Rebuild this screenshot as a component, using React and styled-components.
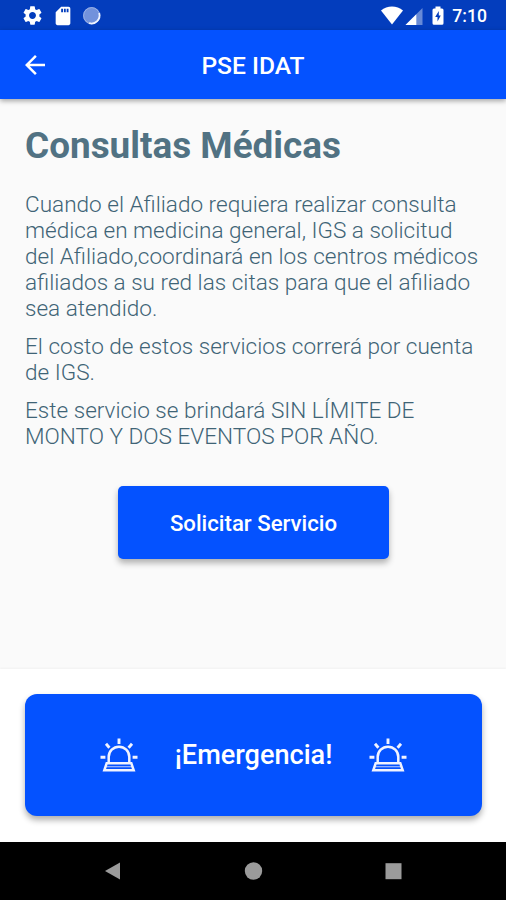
import React from 'react';
import styled, { createGlobalStyle } from 'styled-components';
import { MdArrowBack, MdSettings, MdSdCard } from 'react-icons/md';

const GlobalStyle = createGlobalStyle`
  * {
    box-sizing: border-box;
  }

  body {
    margin: 0;
    font-family: Roboto, sans-serif;
    background: #fafafa;
  }
`;

const Screen = styled.div`
  display: flex;
  flex-direction: column;
  width: 506px;
  height: 900px;
  overflow: hidden;
  background: #fafafa;
`;

const StatusBar = styled.div`
  display: flex;
  align-items: center;
  justify-content: space-between;
  flex: none;
  height: 30px;
  padding: 1px 19px 0 21px;
  background: #033dbd;
  color: #fff;
`;

const StatusGroup = styled.div`
  display: flex;
  align-items: center;
  gap: ${(props) => props.$gap || '0'};

  svg {
    display: block;
  }
`;

const Clock = styled.span`
  font-size: 17.6px;
  line-height: 20px;
  font-weight: 500;
`;

const Header = styled.header`
  position: relative;
  z-index: 1;
  display: grid;
  grid-template-columns: 60px 1fr 60px;
  align-items: center;
  flex: none;
  height: 69px;
  background: #0452ff;
  color: #fff;
  box-shadow: 0 2px 5px rgba(0, 0, 0, 0.35);
`;

const BackButton = styled.button`
  display: flex;
  padding: 0 0 0 20px;
  border: none;
  background: none;
  color: inherit;
  cursor: pointer;
`;

const Title = styled.h1`
  margin: 0;
  padding-top: 2px;
  text-align: center;
  font-size: 24.6px;
  line-height: 28px;
  font-weight: 500;
`;

const Content = styled.main`
  display: flex;
  flex-direction: column;
  flex: 1;
  padding: 25px 20px 0 25px;
  color: #517283;
`;

const Heading = styled.h2`
  margin: 0 0 24px;
  font-size: 36.9px;
  line-height: 44px;
  font-weight: 700;
`;

const Paragraph = styled.p`
  margin: 0 0 12px;
  font-size: 22.57px;
  line-height: 26px;
  font-weight: 300;
  white-space: nowrap;
  color: #3f6476;
`;

const RequestButton = styled.button`
  align-self: center;
  width: 271px;
  height: 73px;
  margin: 24px 0 0 -4px;
  padding: 0;
  border: none;
  border-radius: 5px;
  background: #0452ff;
  color: #fff;
  font: 500 22.2px Roboto, sans-serif;
  box-shadow: 0 4px 6px rgba(0, 0, 0, 0.3);
  cursor: pointer;
`;

const Footer = styled.footer`
  flex: none;
  height: 173px;
  padding: 25px 24px 0 25px;
  background: #fff;
  box-shadow: 0 -1px 2px rgba(0, 0, 0, 0.04);
`;

const EmergencyButton = styled.button`
  display: flex;
  align-items: center;
  justify-content: center;
  gap: 37px;
  width: 100%;
  height: 122px;
  padding: 0;
  border: none;
  border-radius: 12px;
  background: #0452ff;
  color: #fff;
  font: 500 27.1px Roboto, sans-serif;
  box-shadow: 0 4px 6px rgba(0, 0, 0, 0.32);
  cursor: pointer;
`;

const NavBar = styled.nav`
  display: flex;
  align-items: center;
  justify-content: center;
  gap: 122px;
  flex: none;
  height: 58px;
  background: #000;
`;

const SpinnerIcon = () => (
  <svg width="20" height="20" viewBox="0 0 20 20">
    <circle cx="9.6" cy="9.6" r="8.6" fill="#7292dc" />
    <circle cx="9.6" cy="9.6" r="8" fill="none" stroke="#a5b9e8" strokeWidth="0.8" />
    <path d="M17.2 7.1A8.1 8.1 0 0 1 7.1 17.2" fill="none" stroke="#eef3ff" strokeWidth="1.8" />
  </svg>
);

const WifiIcon = () => (
  <svg width="22" height="20" viewBox="0 0 22 20">
    <path d="M0 4.4Q4.8 .5 11 .5T22 4.4L11 18.4Z" fill="#fff" />
  </svg>
);

const SignalIcon = () => (
  <svg width="18" height="20" viewBox="0 0 18 20">
    <path d="M17.5 2V19H.5Z" fill="#fff" fillOpacity="0.4" />
    <path d="M11.3 8.2V19H.5Z" fill="#fff" />
  </svg>
);

const BatteryIcon = () => (
  <svg width="12" height="20" viewBox="0 0 12 20">
    <path
      d="M3.5 .5h5v2H10a1.5 1.5 0 0 1 1.5 1.5v13.3A1.5 1.5 0 0 1 10 18.8H2A1.5 1.5 0 0 1 .5 17.3V4A1.5 1.5 0 0 1 2 2.5h1.5Z"
      fill="#fff"
    />
    <path d="M6.8 5 3.2 11h2.3v4.5L8.8 9.5H6.8Z" fill="#033dbd" />
  </svg>
);

const SirenIcon = () => (
  <svg width="38" height="34" viewBox="0 0 38 34" fill="none" stroke="#f1f3ff" strokeWidth="2.5">
    <path d="M8.7 25V19a10.3 10.3 0 0 1 20.6 0V25" />
    <path d="M6.7 25.2H31.3L33.7 32.3H4.3Z" />
    <path d="M6 28.7H32" strokeWidth="1.2" strokeOpacity="0.65" />
    <path d="M19 .6V6M6 5.8L9.4 9.7M32 5.8L28.6 9.7M.5 19.2H5.4M32.6 19.2H37.5" strokeWidth="2.9" />
  </svg>
);

const NavIcon = ({ children }) => (
  <svg width="18" height="18" viewBox="0 0 18 18" fill="#9b9b9b" overflow="visible">
    {children}
  </svg>
);

const App = () => {
  return (
    <>
      <GlobalStyle />
      <Screen>
        <StatusBar>
          <StatusGroup $gap="8px">
            <MdSettings size={23} />
            <MdSdCard size={22} />
            <SpinnerIcon />
          </StatusGroup>
          <StatusGroup $gap="9px">
            <StatusGroup $gap="2px">
              <WifiIcon />
              <SignalIcon />
            </StatusGroup>
            <StatusGroup $gap="8px">
              <BatteryIcon />
              <Clock>7:10</Clock>
            </StatusGroup>
          </StatusGroup>
        </StatusBar>

        <Header>
          <BackButton type="button" aria-label="Volver">
            <MdArrowBack size={30} />
          </BackButton>
          <Title>PSE IDAT</Title>
        </Header>

        <Content>
          <Heading>Consultas Médicas</Heading>
          <Paragraph>
            Cuando el Afiliado requiera realizar consulta
            <br />
            médica en medicina general, IGS a solicitud
            <br />
            del Afiliado,coordinará en los centros médicos
            <br />
            afiliados a su red las citas para que el afiliado
            <br />
            sea atendido.
          </Paragraph>
          <Paragraph>
            El costo de estos servicios correrá por cuenta
            <br />
            de IGS.
          </Paragraph>
          <Paragraph>
            Este servicio se brindará SIN LÍMITE DE
            <br />
            MONTO Y DOS EVENTOS POR AÑO.
          </Paragraph>
          <RequestButton type="button">Solicitar Servicio</RequestButton>
        </Content>

        <Footer>
          <EmergencyButton type="button">
            <SirenIcon />
            ¡Emergencia!
            <SirenIcon />
          </EmergencyButton>
        </Footer>

        <NavBar>
          <NavIcon>
            <path d="M1 9 16 .5V17.5Z" />
          </NavIcon>
          <NavIcon>
            <circle cx="9.5" cy="9" r="8.7" />
          </NavIcon>
          <NavIcon>
            <rect x="1.5" y="1.2" width="16" height="16" />
          </NavIcon>
        </NavBar>
      </Screen>
    </>
  );
};

export default App;
